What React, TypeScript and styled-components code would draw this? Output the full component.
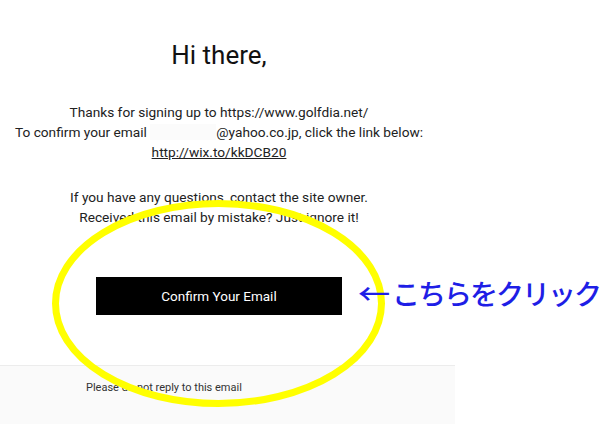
import React from "react";
import styled, { createGlobalStyle } from "styled-components";

const GlobalStyle = createGlobalStyle`
  html, body {
    margin: 0;
    padding: 0;
    background: #ffffff;
    overflow: hidden;
  }
  body {
    font-family: Roboto, "Liberation Sans", Arial, sans-serif;
    color: #222222;
  }
`;

const Page = styled.div`
  position: relative;
  width: 600px;
  height: 425px;
  overflow: hidden;
  background: #ffffff;
`;

const Email = styled.div`
  width: 455px;
  display: flex;
  flex-direction: column;
`;

const Content = styled.div`
  width: 438px;
  display: flex;
  flex-direction: column;
  align-items: center;
  text-align: center;
`;

const Heading = styled.h1`
  margin: 38px 0 0;
  font-size: 26px;
  line-height: 34px;
  font-weight: 400;
  color: #111111;
`;

const Paragraph = styled.p<{ $gap: number }>`
  margin: ${(p) => p.$gap}px 0 0;
  font-size: 13.7px;
  line-height: 20px;
  color: #222222;
  white-space: nowrap;
`;

const Redacted = styled.span`
  display: inline-block;
  width: 66px;
  height: 16px;
  vertical-align: -3px;
  background: #fbfbfb;
`;

const Link = styled.a`
  color: #222222;
  text-decoration: underline;
`;

const ConfirmButton = styled.div`
  margin-top: 50px;
  width: 246px;
  height: 38px;
  background: #000000;
  color: #ffffff;
  font-size: 13.5px;
  display: flex;
  align-items: center;
  justify-content: center;
`;

const Footer = styled.div`
  margin-top: 50px;
  height: 59px;
  background: #fafafa;
  border-top: 1px solid #ececec;
  padding: 14px 0 0 86px;
  box-sizing: border-box;
  font-size: 11px;
  line-height: 16px;
  color: #333333;
`;

const Highlight = styled.svg`
  position: absolute;
  left: 0;
  top: 0;
  pointer-events: none;
`;

const Annotation = styled.div`
  position: absolute;
  left: 358px;
  top: 280px;
  display: flex;
  align-items: baseline;
  white-space: nowrap;
  font-family: "Noto Sans CJK JP", "Noto Sans", sans-serif;
  font-size: 28px;
  line-height: 26px;
  font-weight: 500;
  color: #1e1ee6;
`;

const Arrow = styled.span`
  display: inline-block;
  transform: scaleX(1.15);
  transform-origin: left center;
`;

const Label = styled.span`
  margin-left: 6px;
  letter-spacing: -2px;
`;

export default function App() {
  return (
    <>
      <GlobalStyle />
      <Page>
        <Email>
          <Content>
            <Heading>Hi there,</Heading>
            <Paragraph $gap={30}>
              Thanks for signing up to https://www.golfdia.net/
              <br />
              To confirm your email <Redacted />@yahoo.co.jp, click the link below:
              <br />
              <Link href="#">http://wix.to/kkDCB20</Link>
            </Paragraph>
            <Paragraph $gap={25}>
              If you have any questions, contact the site owner.
              <br />
              Received this email by mistake? Just ignore it!
            </Paragraph>
            <ConfirmButton>Confirm Your Email</ConfirmButton>
          </Content>
          <Footer>Please do not reply to this email</Footer>
        </Email>
        <Highlight width="600" height="425" viewBox="0 0 600 425">
          <ellipse
            cx="218.5"
            cy="303.5"
            rx="163"
            ry="100"
            fill="none"
            stroke="#ffff00"
            strokeWidth="7"
          />
        </Highlight>
        <Annotation>
          <Arrow>←</Arrow>
          <Label>こちらをクリック</Label>
        </Annotation>
      </Page>
    </>
  );
}
